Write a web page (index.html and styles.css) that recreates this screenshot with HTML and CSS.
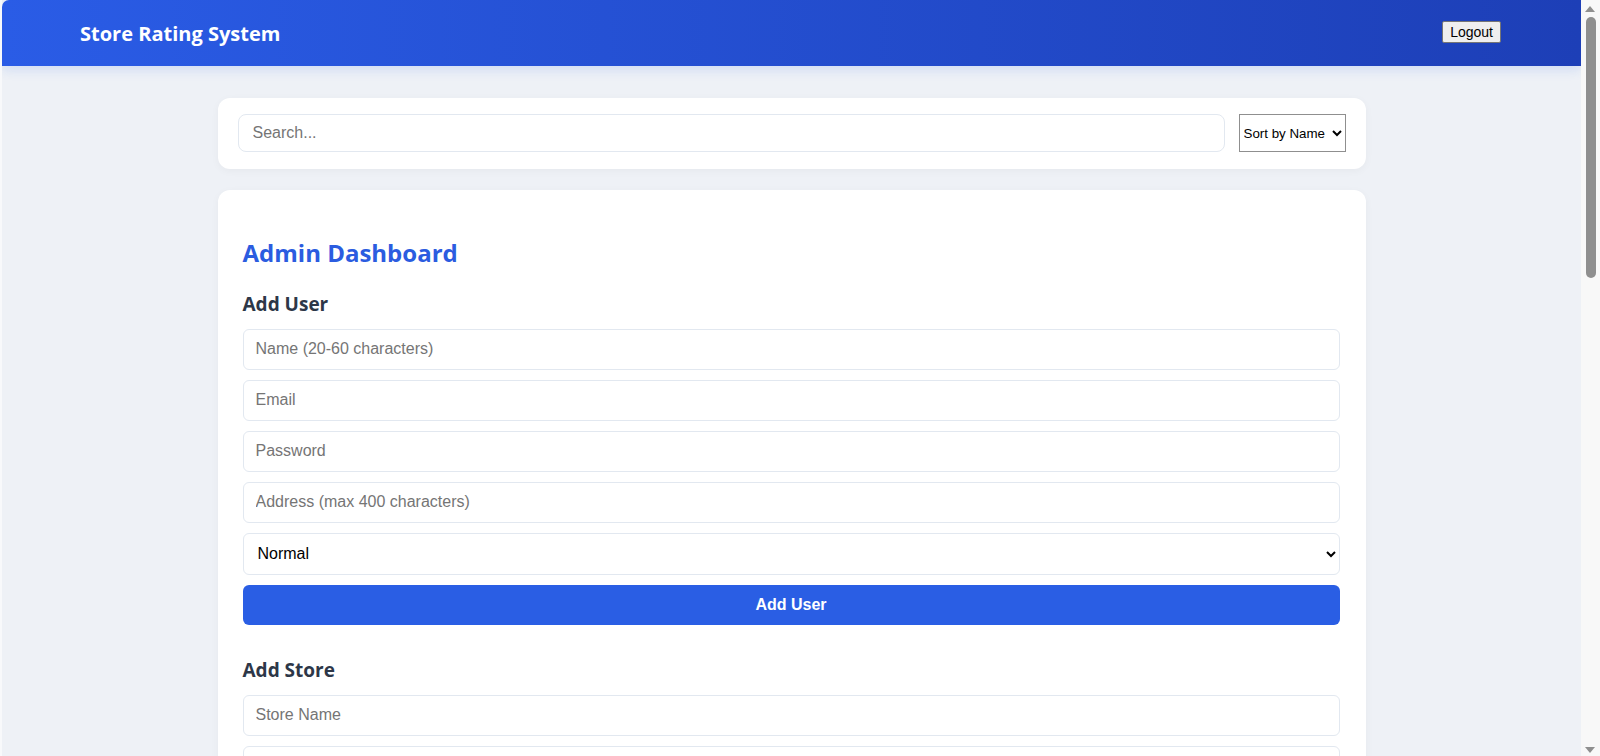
FILE: index.html
```html
<!DOCTYPE html>
<html lang="en">
<head>
  <meta charset="UTF-8">
  <meta name="viewport" content="width=device-width, initial-scale=1.0">
  <title>Store Rating System</title>
  <link rel="stylesheet" href="styles.css">
</head>
<body>
  <header class="app-header">
    <h1 class="app-title">Store Rating System</h1>
    <button class="logout-button">Logout</button>
  </header>

  <main class="page">
    <div class="toolbar">
      <input type="text" class="search-input" placeholder="Search...">
      <select class="sort-select">
        <option>Sort by Name</option>
        <option>Sort by Email</option>
        <option>Sort by Rating</option>
      </select>
    </div>

    <div class="dashboard">
      <h2 class="dashboard-title">Admin Dashboard</h2>

      <section class="form-section">
        <h3 class="section-title">Add User</h3>
        <form class="admin-form">
          <input type="text" class="field" placeholder="Name (20-60 characters)">
          <input type="email" class="field" placeholder="Email">
          <input type="password" class="field" placeholder="Password">
          <input type="text" class="field" placeholder="Address (max 400 characters)">
          <select class="field field-select">
            <option>Normal</option>
            <option>Admin</option>
            <option>Store Owner</option>
          </select>
          <button type="button" class="submit-button">Add User</button>
        </form>
      </section>

      <section class="form-section">
        <h3 class="section-title">Add Store</h3>
        <form class="admin-form">
          <input type="text" class="field" placeholder="Store Name">
          <input type="email" class="field" placeholder="Store Email">
          <input type="text" class="field" placeholder="Store Address">
          <select class="field field-select">
            <option>Select Owner</option>
          </select>
          <button type="button" class="submit-button">Add Store</button>
        </form>
      </section>

      <section class="form-section">
        <h3 class="section-title">Users</h3>
        <table class="data-table">
          <thead>
            <tr><th>Name</th><th>Email</th><th>Address</th><th>Role</th></tr>
          </thead>
          <tbody>
            <tr><td>System Administrator Account</td><td>admin@example.com</td><td>12 Main Street</td><td>admin</td></tr>
            <tr><td>Normal User Test Account One</td><td>user1@example.com</td><td>45 Park Avenue</td><td>normal</td></tr>
            <tr><td>Store Owner Test Account One</td><td>owner1@example.com</td><td>78 Lake Road</td><td>owner</td></tr>
            <tr><td>Normal User Test Account Two</td><td>user2@example.com</td><td>9 Hill View</td><td>normal</td></tr>
          </tbody>
        </table>
      </section>

      <section class="form-section">
        <h3 class="section-title">Stores</h3>
        <table class="data-table">
          <thead>
            <tr><th>Name</th><th>Email</th><th>Address</th><th>Rating</th></tr>
          </thead>
          <tbody>
            <tr><td>Fresh Mart</td><td>freshmart@example.com</td><td>22 Market Street</td><td>4.3</td></tr>
            <tr><td>City Books</td><td>citybooks@example.com</td><td>5 Library Lane</td><td>4.8</td></tr>
            <tr><td>Tech World</td><td>techworld@example.com</td><td>101 Circuit Road</td><td>3.9</td></tr>
          </tbody>
        </table>
      </section>

      <section class="form-section">
        <h3 class="section-title">Statistics</h3>
        <div class="stats">
          <div class="stat-box"><span class="stat-value">4</span><span class="stat-label">Total Users</span></div>
          <div class="stat-box"><span class="stat-value">3</span><span class="stat-label">Total Stores</span></div>
          <div class="stat-box"><span class="stat-value">12</span><span class="stat-label">Total Ratings</span></div>
        </div>
      </section>
    </div>
  </main>
</body>
</html>
```

FILE: styles.css
```css
html {
  background-color: #f8f8f8;
}

html, body {
  margin: 0;
  padding: 0;
}

body {
  font-family: "Segoe UI", "Open Sans", sans-serif;
  background-color: #eef1f6;
  color: #2d3748;
  border-left: 2px solid #f8f9fb;
  margin-right: 19px;
}

/* scrollbar gutter, like the window's own */
body::before {
  content: "";
  position: fixed;
  top: 6px;
  right: 5px;
  border-left: 5px solid transparent;
  border-right: 5px solid transparent;
  border-bottom: 6px solid #8f8f8f;
}

body::after {
  content: "";
  position: fixed;
  top: 17px;
  right: 4px;
  width: 10px;
  height: 261px;
  background: #8f8f8f;
  border-radius: 5px;
}

.page::after {
  content: "";
  position: fixed;
  bottom: 3px;
  right: 5px;
  border-left: 5px solid transparent;
  border-right: 5px solid transparent;
  border-top: 6px solid #8f8f8f;
}

.app-header {
  display: flex;
  justify-content: space-between;
  align-items: center;
  height: 66px;
  padding: 0 80px 0 78px;
  background: linear-gradient(90deg, #2a5ce6, #1d3fb7);
  border-top-left-radius: 7px;
  box-shadow: 0 4px 12px rgba(37, 99, 235, 0.14);
}

.app-title {
  margin: 0;
  font-size: 20px;
  font-weight: 700;
  color: #ffffff;
}

.logout-button {
  font-family: "Liberation Sans", Arial, sans-serif;
  font-size: 14px;
  padding: 2px 7px;
  margin-top: -2px;
  background: #efefef;
  border: 1px solid #767676;
  border-radius: 2px;
  color: #000;
}

.page {
  max-width: 1148px;
  margin: 32px auto;
}

.toolbar {
  display: flex;
  gap: 14px;
  padding: 16px 20px 17px;
  background: #ffffff;
  border-radius: 12px;
  box-shadow: 0 2px 8px rgba(0, 0, 0, 0.04);
}

.search-input {
  flex: 1;
  height: 38px;
  padding: 0 14px;
  font-family: "Liberation Sans", Arial, sans-serif;
  font-size: 16px;
  border: 1px solid #e2e8f0;
  border-radius: 8px;
  outline: none;
  box-sizing: border-box;
}

.sort-select {
  font-family: "Liberation Sans", Arial, sans-serif;
  font-size: 13.33px;
  padding: 0;
  background: #ffffff;
  border: 1px solid #8f8f8f;
  border-radius: 0;
  color: #000;
}

.dashboard {
  margin-top: 21px;
  padding: 25px 26px 25px 25px;
  background: #ffffff;
  border-radius: 12px;
  box-shadow: 0 2px 8px rgba(0, 0, 0, 0.04);
}

.dashboard-title {
  margin: 21px 0 19.5px;
  font-size: 24px;
  line-height: 34px;
  font-weight: 700;
  color: #2b5ce0;
}

.form-section {
  margin-bottom: 31px;
}

.section-title {
  margin: 0 0 11px;
  font-size: 19px;
  line-height: 28px;
  font-weight: 700;
  color: #2d3748;
}

.admin-form {
  display: flex;
  flex-direction: column;
  gap: 10px;
}

.field {
  height: 41px;
  padding: 0 12px;
  font-family: "Liberation Sans", Arial, sans-serif;
  font-size: 16px;
  color: #000;
  background: #ffffff;
  border: 1px solid #e2e8f0;
  border-radius: 6px;
  outline: none;
  box-sizing: border-box;
}

.field-select {
  height: 42px;
  padding: 0 10px;
}

.submit-button {
  height: 40px;
  font-family: "Liberation Sans", Arial, sans-serif;
  font-size: 16px;
  font-weight: 700;
  color: #ffffff;
  background: #2a5ee4;
  border: none;
  border-radius: 6px;
  cursor: pointer;
}

.data-table {
  width: 100%;
  border-collapse: collapse;
  font-size: 15px;
}

.data-table th,
.data-table td {
  padding: 12px;
  text-align: left;
  border-bottom: 1px solid #e2e8f0;
}

.data-table th {
  background: #f7f9fc;
}

.stats {
  display: grid;
  grid-template-columns: repeat(3, 1fr);
  gap: 16px;
}

.stat-box {
  display: flex;
  flex-direction: column;
  gap: 6px;
  padding: 20px;
  border: 1px solid #e2e8f0;
  border-radius: 8px;
}

.stat-value {
  font-size: 28px;
  font-weight: 700;
  color: #2b5ce0;
}

.stat-label {
  color: #4a5568;
}
```
